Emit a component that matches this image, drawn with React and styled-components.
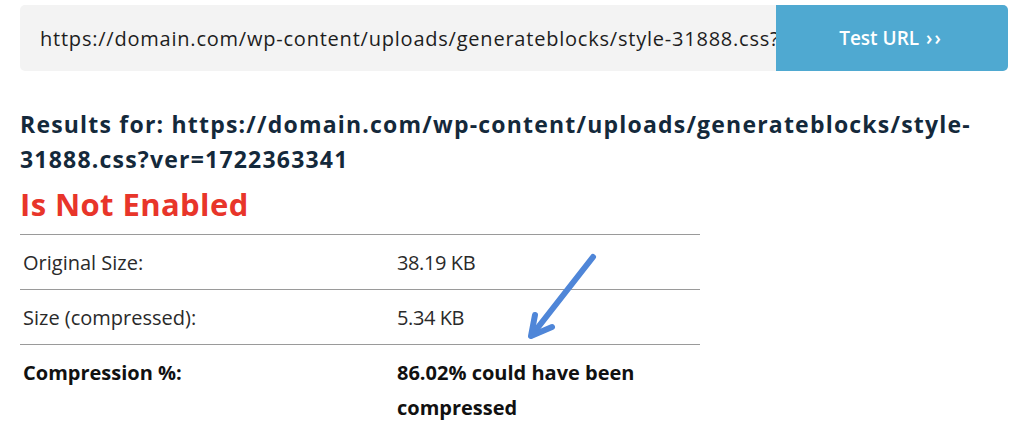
import styled, { createGlobalStyle } from "styled-components";

const GlobalStyle = createGlobalStyle`
  html, body {
    margin: 0;
    padding: 0;
    background: #ffffff;
  }
  body {
    font-family: "Open Sans", "Liberation Sans", sans-serif;
    color: #1b1b1b;
  }
`;

const Page = styled.div`
  width: 1024px;
  height: 430px;
  overflow: hidden;
  padding: 5px 16px 0 20px;
  box-sizing: border-box;
`;

const UrlForm = styled.form`
  display: flex;
  height: 66px;
  background: #f3f3f3;
  border-radius: 5px;
  overflow: hidden;
`;

const UrlInput = styled.input`
  flex: 1;
  min-width: 0;
  border: 0;
  outline: 0;
  background: transparent;
  padding: 0 0 0 20px;
  font-family: "Open Sans", sans-serif;
  font-size: 20px;
  letter-spacing: 0.78px;
  color: #1d1d1d;
`;

const TestButton = styled.button`
  width: 232px;
  border: 0;
  background: #4fa9d1;
  color: #ffffff;
  font-family: "Open Sans", sans-serif;
  font-weight: 600;
  font-size: 19px;
  padding-left: 4px;
  cursor: pointer;
`;

const Chevrons = styled.span`
  letter-spacing: 2px;
  margin-left: 2px;
`;

const Results = styled.h3`
  margin: 36px 0 0;
  font-size: 23px;
  line-height: 35px;
  letter-spacing: 1.2px;
  font-weight: 700;
  color: #14293b;
`;

const Status = styled.h2`
  margin: 7px 0 0;
  font-size: 31px;
  line-height: 40px;
  letter-spacing: 0.4px;
  font-weight: 700;
  color: #e8352a;
`;

const TableWrap = styled.div`
  position: relative;
  width: 680px;
  margin-top: 10px;
`;

const Table = styled.table`
  width: 100%;
  border-collapse: collapse;
  border-top: 1px solid #9a9a9a;
  font-size: 20px;
`;

const Row = styled.tr`
  border-bottom: ${(p) => (p.$last ? "0" : "1px solid #9a9a9a")};
  font-weight: ${(p) => (p.$bold ? 700 : 400)};
`;

const Cell = styled.td`
  padding: 10px 0 9px ${(p) => (p.$first ? "3px" : "0")};
  width: ${(p) => (p.$first ? "374px" : "auto")};
  line-height: 35px;
  vertical-align: top;
  letter-spacing: ${(p) => (p.$first || p.$strong ? "0" : "-0.4px")};
  color: ${(p) => (p.$strong ? "#111111" : "#2a2a2a")};
`;

const Arrow = styled.svg`
  position: absolute;
  left: 500px;
  top: 10px;
  pointer-events: none;
`;

export default function App() {
  const rows = [
    ["Original Size:", "38.19 KB"],
    ["Size (compressed):", "5.34 KB"],
  ];
  return (
    <Page>
      <GlobalStyle />
      <UrlForm onSubmit={(e) => e.preventDefault()}>
        <UrlInput
          type="text"
          defaultValue="https://domain.com/wp-content/uploads/generateblocks/style-31888.css?ver=1722363341"
        />
        <TestButton type="submit">
          Test URL <Chevrons>››</Chevrons>
        </TestButton>
      </UrlForm>
      <Results>
        Results for: https://domain.com/wp-content/uploads/generateblocks/style-31888.css?ver=1722363341
      </Results>
      <Status>Is Not Enabled</Status>
      <TableWrap>
        <Table>
          <tbody>
            {rows.map(([k, v]) => (
              <Row key={k}>
                <Cell $first>{k}</Cell>
                <Cell>{v}</Cell>
              </Row>
            ))}
            <Row $bold $last>
              <Cell $first $strong>
                Compression %:
              </Cell>
              <Cell $strong>
                86.02% could have been
                <br />
                compressed
              </Cell>
            </Row>
          </tbody>
        </Table>
        <Arrow width="90" height="100" viewBox="0 0 90 100">
          <path
            d="M73 13 L12 91"
            stroke="#4f86d8"
            strokeWidth="6"
            strokeLinecap="round"
            fill="none"
          />
          <path
            d="M15 71 L11 92 L32 83"
            stroke="#4f86d8"
            strokeWidth="6"
            strokeLinecap="round"
            strokeLinejoin="round"
            fill="none"
          />
        </Arrow>
      </TableWrap>
    </Page>
  );
}
